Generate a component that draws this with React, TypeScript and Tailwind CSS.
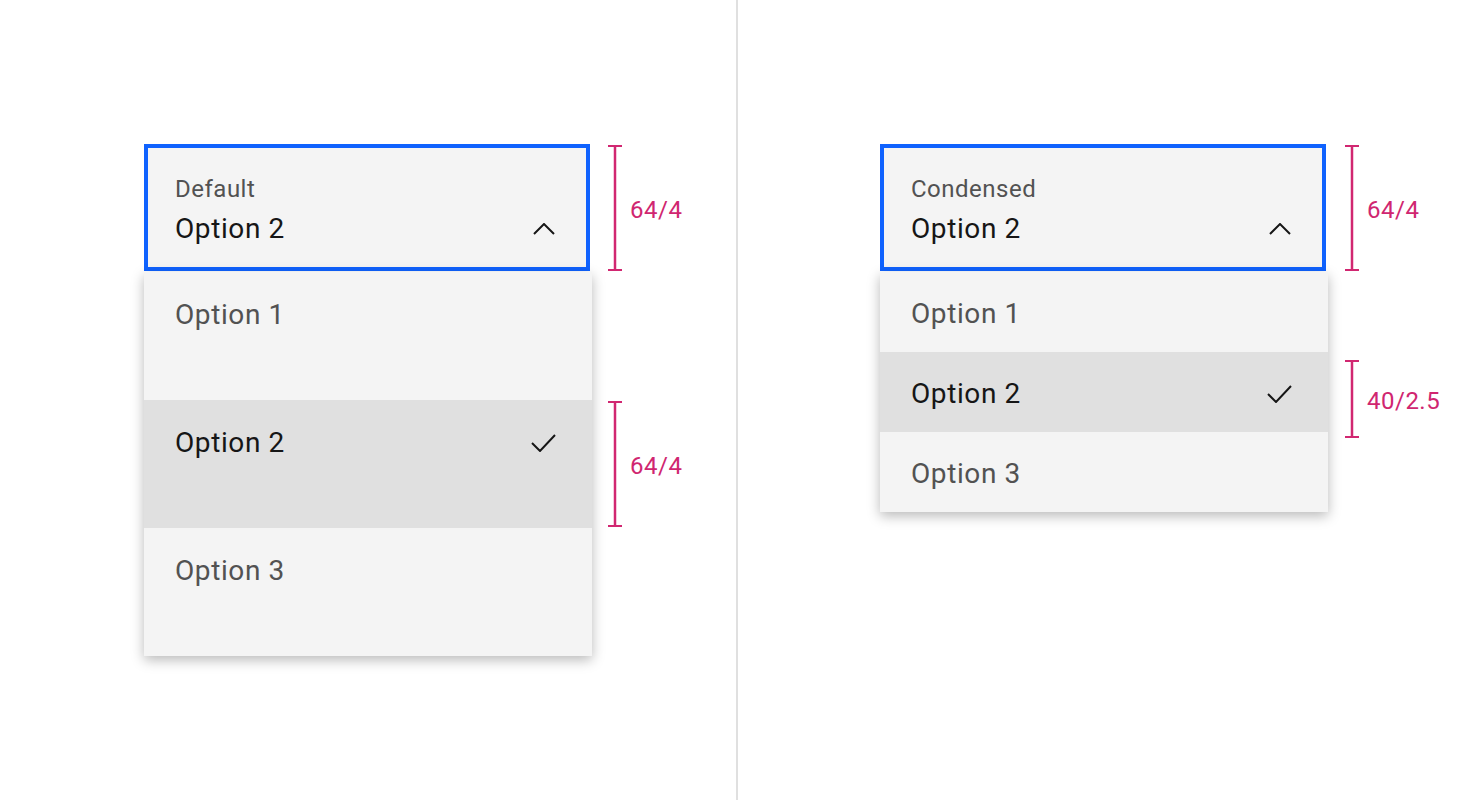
import React from 'react';

const font = { fontFamily: 'Roboto, "Noto Sans", sans-serif' };

const ChevronUp = () => (
  <svg width="22" height="12" viewBox="0 0 22 12" fill="none" stroke="#161616" strokeWidth={2}>
    <polyline points="1,11 11,1 21,11" />
  </svg>
);

const Check = () => (
  <svg width="25" height="18" viewBox="0 0 25 18" fill="none" stroke="#161616" strokeWidth={2}>
    <polyline points="1,9 9,17 24,1" />
  </svg>
);

const Bracket = ({ height, label, top }: { height: number; label: string; top: number }) => (
  <div className="flex items-center" style={{ height, marginTop: top }}>
    <svg width="14" height={height} viewBox={`0 0 14 ${height}`} fill="none" stroke="#d12771">
      <line x1="7" y1="0" x2="7" y2={height} strokeWidth={2.5} />
      <line x1="0" y1="1" x2="14" y2="1" strokeWidth={2} />
      <line x1="0" y1={height - 1} x2="14" y2={height - 1} strokeWidth={2} />
    </svg>
    <span className="ml-[8px] pt-[4px] text-[24px] leading-[32px] tracking-[0.5px] text-[#d02670]">{label}</span>
  </div>
);

interface DropdownProps {
  label: string;
  condensed?: boolean;
}

const Dropdown: React.FC<DropdownProps> = ({ label, condensed }) => {
  const options = ['Option 1', 'Option 2', 'Option 3'];
  return (
    <div className="w-[448px]">
      <div className="w-[446px] h-[127px] border-[4px] border-[#0f62fe] bg-[#f4f4f4] pl-[27px] pr-[31px] pt-[25px]">
        <div className="text-[24px] leading-[32px] tracking-[0.5px] text-[#525252]">{label}</div>
        <div className="mt-[6px] flex items-center justify-between">
          <span className="text-[28px] leading-[36px] tracking-[0.6px] text-[#161616]">Option 2</span>
          <ChevronUp />
        </div>
      </div>
      <div className="mt-[1px] bg-[#f4f4f4] shadow-[0_4px_12px_rgba(0,0,0,0.28)]">
        {options.map((opt) => {
          const selected = opt === 'Option 2';
          return (
            <div
              key={opt}
              className={
                (condensed ? 'h-[80px] items-center pt-[3px] ' : 'h-[128px] items-start pt-[25px] ') +
                'flex pl-[31px] pr-[36px] ' +
                (selected ? 'bg-[#e0e0e0]' : '')
              }
            >
              <div className="flex w-full items-center justify-between">
                <span
                  className={
                    'text-[28px] leading-[36px] tracking-[0.6px] ' +
                    (selected ? 'text-[#161616]' : 'text-[#525252]')
                  }
                >
                  {opt}
                </span>
                {selected && <Check />}
              </div>
            </div>
          );
        })}
      </div>
    </div>
  );
};

export default function App() {
  return (
    <div className="flex h-[800px] w-[1472px] bg-white" style={font}>
      <div className="flex w-[736px] pl-[144px] pt-[144px]">
        <Dropdown label="Default" />
        <div className="ml-[16px] flex flex-col">
          <Bracket height={126} label="64/4" top={1} />
          <Bracket height={126} label="64/4" top={130} />
        </div>
      </div>
      <div className="w-[2px] bg-[#e0e0e0]" />
      <div className="flex flex-1 pl-[142px] pt-[144px]">
        <Dropdown label="Condensed" condensed />
        <div className="ml-[17px] flex flex-col">
          <Bracket height={126} label="64/4" top={1} />
          <Bracket height={78} label="40/2.5" top={89} />
        </div>
      </div>
    </div>
  );
}
